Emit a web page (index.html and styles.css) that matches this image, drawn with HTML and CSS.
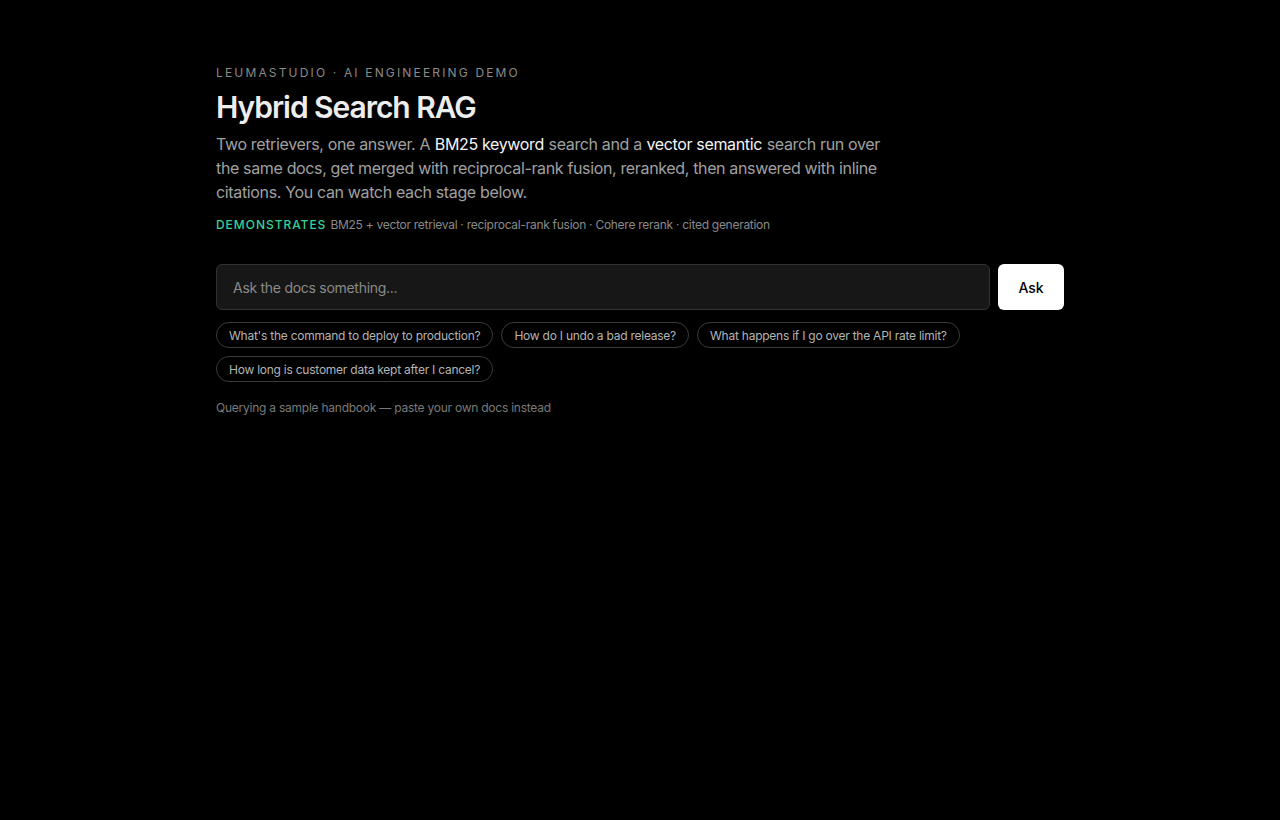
FILE: index.html
```html
<!DOCTYPE html>
<html lang="en">
<head>
    <meta charset="UTF-8">
    <meta name="viewport" content="width=device-width, initial-scale=1.0">
    <title>Hybrid Search RAG</title>
    <link rel="stylesheet" href="styles.css">
</head>
<body>
    <main class="page">
        <header class="intro">
            <p class="eyebrow">LeumaStudio · AI Engineering Demo</p>
            <h1 class="title">Hybrid Search RAG</h1>
            <p class="lede">
                Two retrievers, one answer. A <strong>BM25 keyword</strong> search and a
                <strong>vector semantic</strong> search run over the same docs, get merged with
                reciprocal-rank fusion, reranked, then answered with inline citations. You can
                watch each stage below.
            </p>
            <p class="demonstrates">
                <span class="demonstrates__label">Demonstrates</span>
                BM25 + vector retrieval · reciprocal-rank fusion · Cohere rerank · cited generation
            </p>
        </header>

        <form class="ask" onsubmit="return false">
            <input class="ask__input" type="text" placeholder="Ask the docs something...">
            <button class="ask__button" type="submit">Ask</button>
        </form>

        <div class="chips">
            <button class="chip" type="button">What's the command to deploy to production?</button>
            <button class="chip" type="button">How do I undo a bad release?</button>
            <button class="chip" type="button">What happens if I go over the API rate limit?</button>
            <button class="chip" type="button">How long is customer data kept after I cancel?</button>
        </div>

        <p class="note">Querying a sample handbook — paste your own docs instead</p>
    </main>
</body>
</html>
```

FILE: styles.css
```css
/* Base */
body {
    margin: 0;
    background: #000;
    color: #ededed;
    font-family: Inter, "Liberation Sans", sans-serif;
}

.page {
    max-width: 848px;
    margin: 0 auto;
    padding: 65px 0;
}

/* Intro */
.eyebrow {
    margin: 0;
    font-size: 12px;
    line-height: 16px;
    letter-spacing: 0.18em;
    text-transform: uppercase;
    color: #8a8a8a;
}

.title {
    margin: 8px 0 0;
    font-size: 30px;
    line-height: 36px;
    font-weight: 600;
    letter-spacing: -0.035em;
    color: #ededed;
}

.lede {
    max-width: 672px;
    margin: 7px 0 0;
    font-size: 16px;
    line-height: 24px;
    letter-spacing: -0.022em;
    color: #a1a1a1;
}

.lede strong {
    margin: 0 0.5px;
    font-weight: 400;
    color: #f5f5f5;
}

.demonstrates {
    margin: 13px 0 0;
    font-size: 12px;
    line-height: 16px;
    letter-spacing: -0.023em;
    color: #8a8a8a;
}

.demonstrates__label {
    margin-right: 1px;
    letter-spacing: 0.08em;
    text-transform: uppercase;
    font-weight: 500;
    color: #34d399;
}

/* Ask bar */
.ask {
    display: flex;
    gap: 8px;
    margin-top: 31px;
}

.ask__input {
    flex: 1;
    height: 46px;
    box-sizing: border-box;
    padding: 0 16px;
    background: #171717;
    border: 1px solid #333;
    border-radius: 6px;
    color: #ededed;
    font: inherit;
    font-size: 14px;
    letter-spacing: -0.02em;
    outline: none;
}

.ask__input::placeholder { color: #8a8a8a; }

.ask__button {
    width: 66px;
    height: 46px;
    padding: 0;
    background: #fff;
    color: #000;
    border: 0;
    border-radius: 6px;
    font: inherit;
    font-size: 14px;
    font-weight: 500;
    cursor: pointer;
}

/* Suggestions */
.chips {
    display: flex;
    flex-wrap: wrap;
    gap: 8px;
    margin-top: 12px;
}

.chip {
    box-sizing: border-box;
    height: 26px;
    padding: 0 12px;
    background: transparent;
    color: #b4b4b4;
    border: 1px solid #3a3a3a;
    border-radius: 999px;
    font: inherit;
    font-size: 12px;
    letter-spacing: -0.02em;
    cursor: pointer;
}

.note {
    margin: 18px 0 0;
    font-size: 12px;
    line-height: 16px;
    letter-spacing: -0.02em;
    color: #7a7a7a;
}
```
